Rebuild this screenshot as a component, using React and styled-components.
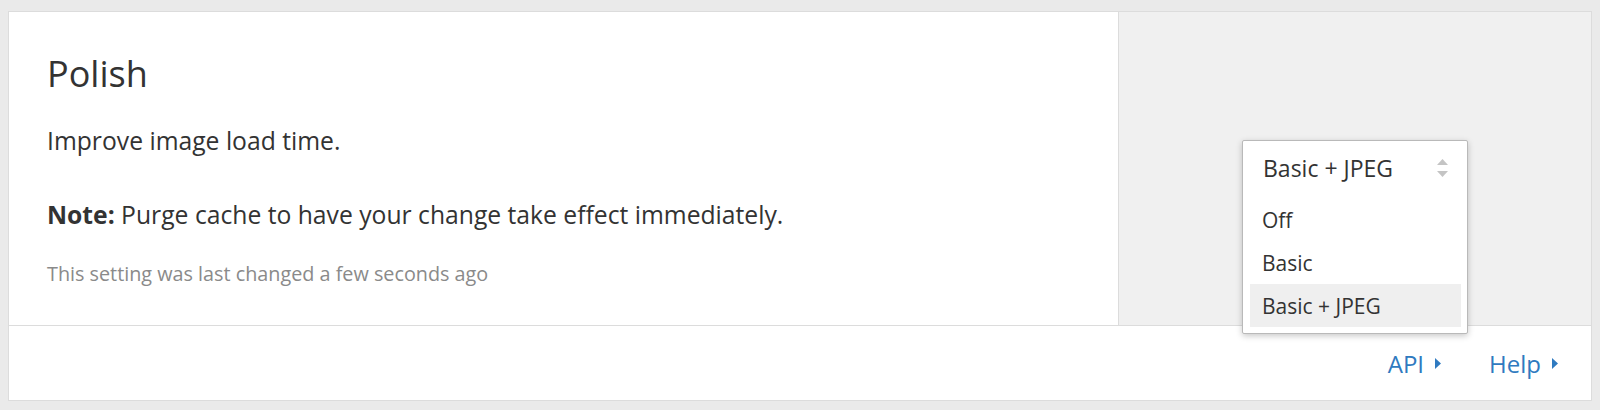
import React from 'react';
import styled, { createGlobalStyle } from 'styled-components';

const GlobalStyle = createGlobalStyle`
  html, body {
    margin: 0;
    padding: 0;
    background: #eaeaea;
    font-family: "Open Sans", "Liberation Sans", sans-serif;
    color: #333;
  }
`;

const Page = styled.div`
  width: 1600px;
  height: 410px;
  padding: 11px 8px;
  box-sizing: border-box;
`;

const Card = styled.div`
  background: #fff;
  border: 1px solid #dcdcdc;
  display: flex;
  flex-direction: column;
`;

const Body = styled.div`
  display: flex;
  height: 313px;
  border-bottom: 1px solid #dcdcdc;
`;

const Content = styled.div`
  flex: 1;
  padding: 40px 38px 0;
`;

const Title = styled.h2`
  margin: 0 0 29px;
  font-size: 36px;
  font-weight: 400;
  line-height: 44px;
  color: #333;
`;

const Text = styled.p`
  margin: 0 0 ${props => props.gap || 0}px;
  font-size: 24.7px;
  line-height: 32px;
  color: #333;

  strong {
    font-weight: 700;
  }
`;

const Meta = styled.p`
  margin: 0;
  font-size: 19.8px;
  line-height: 28px;
  color: #8a8a8a;
`;

const Side = styled.div`
  width: 473px;
  background: #f0f0f0;
  border-left: 1px solid #dcdcdc;
  display: flex;
  align-items: center;
  justify-content: center;
  padding-bottom: 3px;
  box-sizing: border-box;
`;

const SelectWrap = styled.div`
  position: relative;
  width: 226px;
  height: 54px;
`;

const Menu = styled.div`
  position: absolute;
  top: 0;
  left: 0;
  right: 0;
  z-index: 2;
  background: #fff;
  border: 1px solid #b9b9b9;
  border-radius: 2px;
  box-shadow: 0 2px 6px rgba(0, 0, 0, 0.22);
  padding-bottom: 6px;
`;

const Current = styled.div`
  display: flex;
  align-items: center;
  justify-content: space-between;
  height: 54px;
  padding: 0 18px 0 20px;
  margin-bottom: 3px;
  font-size: 23px;
  color: #333;
`;

const Option = styled.div`
  height: 43px;
  display: flex;
  align-items: center;
  margin: 0 6px 0 7px;
  padding-left: 12px;
  font-size: 21px;
  color: #333;
  background: ${props => (props.active ? '#efefef' : 'transparent')};
`;

const Footer = styled.div`
  height: 74px;
  display: flex;
  align-items: center;
  justify-content: flex-end;
  gap: 48px;
  padding-right: 33px;
`;

const Link = styled.a`
  display: flex;
  align-items: center;
  gap: 11px;
  font-size: 24px;
  color: #2f7ac0;
  text-decoration: none;
`;

const Caret = () => (
  <svg width="6" height="11" viewBox="0 0 6 11">
    <path d="M0 0 L6 5.5 L0 11 Z" fill="#2f7ac0" />
  </svg>
);

const SortIcon = () => (
  <svg width="13" height="22" viewBox="0 0 13 22">
    <path d="M6.5 2 L12 8 L1 8 Z" fill="#c4c4c4" />
    <path d="M6.5 20 L12 14 L1 14 Z" fill="#c4c4c4" />
  </svg>
);

const options = ['Off', 'Basic', 'Basic + JPEG'];

const App = () => {
  const selected = 'Basic + JPEG';

  return (
    <Page>
      <GlobalStyle />
      <Card>
        <Body>
          <Content>
            <Title>Polish</Title>
            <Text gap={42}>Improve image load time.</Text>
            <Text gap={29}>
              <strong>Note:</strong> Purge cache to have your change take effect immediately.
            </Text>
            <Meta>This setting was last changed a few seconds ago</Meta>
          </Content>
          <Side>
            <SelectWrap>
              <Menu>
                <Current>
                  {selected}
                  <SortIcon />
                </Current>
                {options.map(option => (
                  <Option key={option} active={option === selected}>
                    {option}
                  </Option>
                ))}
              </Menu>
            </SelectWrap>
          </Side>
        </Body>
        <Footer>
          <Link href="#">
            API <Caret />
          </Link>
          <Link href="#">
            Help <Caret />
          </Link>
        </Footer>
      </Card>
    </Page>
  );
};

export default App;
